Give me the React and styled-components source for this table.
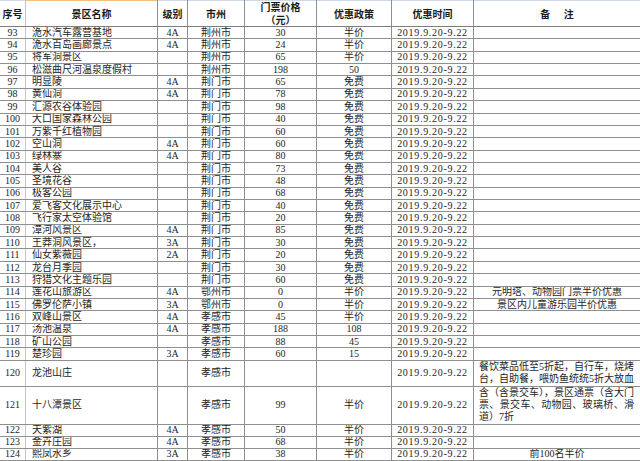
import React from "react";
import styled, { createGlobalStyle } from "styled-components";

const GlobalStyle = createGlobalStyle`
  body {
    margin: 0;
    background: #fff;
  }
`;

const COLS = "26px 132px 30px 57px 72px 75px 82px 166px";
const DATE = "2019.9.20-9.22";

const Sheet = styled.div`
  width: 640px;
  height: 461px;
  overflow: hidden;
  background: #fff;
  color: #1e1e1e;
  font-family: "Liberation Serif", "Noto Sans CJK SC", serif;
  font-size: 10px;
`;

const Row = styled.div`
  display: grid;
  grid-template-columns: ${COLS};
  height: ${(p) => p.$h}px;
  box-sizing: border-box;
  border-bottom: 1px solid #8f8f8f;
`;

const HeadRow = styled(Row)`
  box-shadow: inset 0 1px 0 #cdd9e8;
  border-bottom-color: #7d7d7d;
`;

const Cell = styled.div`
  display: flex;
  align-items: center;
  justify-content: ${(p) => (p.$left ? "flex-start" : "center")};
  padding: ${(p) => (p.$left ? "0 0 0 6px" : "0")};
  box-sizing: border-box;
  border-right: 1px solid ${(p) => (p.$soft ? "#c4c4c4" : "#8f8f8f")};
  white-space: nowrap;
  overflow: hidden;
  line-height: 12px;
  &:last-child {
    border-right: none;
  }
`;

const HeadCell = styled(Cell)`
  flex-direction: column;
  font-family: "Noto Sans CJK SC", "Liberation Sans", sans-serif;
  font-weight: 700;
  font-size: 10px;
  line-height: 13px;
  color: #1a1a1a;
  padding: 0;
  box-shadow: ${(p) => (p.$accent ? "inset 0 1px 0 #f3bd7c" : "none")};
  white-space: pre;
`;

const DateText = styled.span`
  letter-spacing: 0.7px;
`;

const Remark = styled.div`
  display: flex;
  flex-direction: column;
  align-self: center;
  width: 100%;
  padding: 0 6px 0 5px;
  box-sizing: border-box;
`;

const RemarkLine = styled.span`
  display: block;
  line-height: 12px;
  white-space: nowrap;
  text-align: ${(p) => (p.$last ? "left" : "justify")};
  text-align-last: ${(p) => (p.$last ? "left" : "justify")};
`;

const rows = [
  ["93", "洈水汽车露营基地", "4A", "荆州市", "30", "半价"],
  ["94", "洈水百岛画廊景点", "4A", "荆州市", "24", "半价"],
  ["95", "将军洞景区", "", "荆州市", "65", "半价"],
  ["96", "松滋曲尺河温泉度假村", "", "荆州市", "198", "50"],
  ["97", "明显陵", "4A", "荆门市", "65", "免费"],
  ["98", "黄仙洞", "4A", "荆门市", "78", "免费"],
  ["99", "汇源农谷体验园", "", "荆门市", "98", "免费"],
  ["100", "大口国家森林公园", "", "荆门市", "40", "免费"],
  ["101", "万紫千红植物园", "", "荆门市", "60", "免费"],
  ["102", "空山洞", "4A", "荆门市", "60", "免费"],
  ["103", "绿林寨", "4A", "荆门市", "80", "免费"],
  ["104", "美人谷", "", "荆门市", "73", "免费"],
  ["105", "圣境花谷", "", "荆门市", "48", "免费"],
  ["106", "极客公园", "", "荆门市", "68", "免费"],
  ["107", "爱飞客文化展示中心", "", "荆门市", "40", "免费"],
  ["108", "飞行家太空体验馆", "", "荆门市", "20", "免费"],
  ["109", "漳河风景区", "4A", "荆门市", "85", "免费"],
  ["110", "王莽洞风景区，", "3A", "荆门市", "30", "免费"],
  ["111", "仙女紫薇园", "2A", "荆门市", "20", "免费"],
  ["112", "龙台月季园", "", "荆门市", "30", "免费"],
  ["113", "狩猎文化主题乐园", "", "荆门市", "60", "免费"],
  ["114", "莲花山旅游区", "4A", "鄂州市", "0", "半价", ["元明塔、动物园门票半价优惠"]],
  ["115", "佛罗伦萨小镇", "3A", "鄂州市", "0", "半价", ["景区内儿童游乐园半价优惠"]],
  ["116", "双峰山景区", "4A", "孝感市", "45", "半价"],
  ["117", "汤池温泉", "4A", "孝感市", "188", "108"],
  ["118", "矿山公园", "", "孝感市", "88", "45"],
  ["119", "楚珍园", "3A", "孝感市", "60", "15"],
  ["120", "龙池山庄", "", "孝感市", "", "", ["餐饮菜品低至5折起，自行车，烧烤", "台，自助餐，喂奶鱼统统5折大放血"], 26, true],
  ["121", "十八潭景区", "", "孝感市", "99", "半价", ["含（含景交车），景区通票（含大门", "票、景交车、动物园、玻璃桥、滑", "道）7折"], 38],
  ["122", "天紫湖", "4A", "孝感市", "50", "半价", null, 12],
  ["123", "金卉庄园", "4A", "孝感市", "68", "半价", null, 12],
  ["124", "熙凤水乡", "3A", "孝感市", "38", "半价", ["前100名半价"], 12],
];

function RemarkCell({ lines, fill }) {
  if (!lines) return <Cell />;
  if (lines.length === 1) return <Cell>{lines[0]}</Cell>;
  return (
    <Cell>
      <Remark>
        {lines.map((l, i) => (
          <RemarkLine key={i} $last={!fill && i === lines.length - 1}>
            {l}
          </RemarkLine>
        ))}
      </Remark>
    </Cell>
  );
}

export default function App() {
  return (
    <Sheet>
      <GlobalStyle />
      <HeadRow $h={27}>
        <HeadCell $soft>序号</HeadCell>
        <HeadCell $accent>景区名称</HeadCell>
        <HeadCell>级别</HeadCell>
        <HeadCell>市州</HeadCell>
        <HeadCell>
          <span>门票价格</span>
          <span>（元）</span>
        </HeadCell>
        <HeadCell>优惠政策</HeadCell>
        <HeadCell>优惠时间</HeadCell>
        <HeadCell>{"备      注"}</HeadCell>
      </HeadRow>
      {rows.map(([no, name, level, city, price, policy, remark, h, fill]) => (
        <Row key={no} $h={h || 12.37}>
          <Cell $soft>{no}</Cell>
          <Cell $left>{name}</Cell>
          <Cell>{level}</Cell>
          <Cell>{city}</Cell>
          <Cell>{price}</Cell>
          <Cell>{policy}</Cell>
          <Cell>
            <DateText>{DATE}</DateText>
          </Cell>
          <RemarkCell lines={remark} fill={fill} />
        </Row>
      ))}
    </Sheet>
  );
}
